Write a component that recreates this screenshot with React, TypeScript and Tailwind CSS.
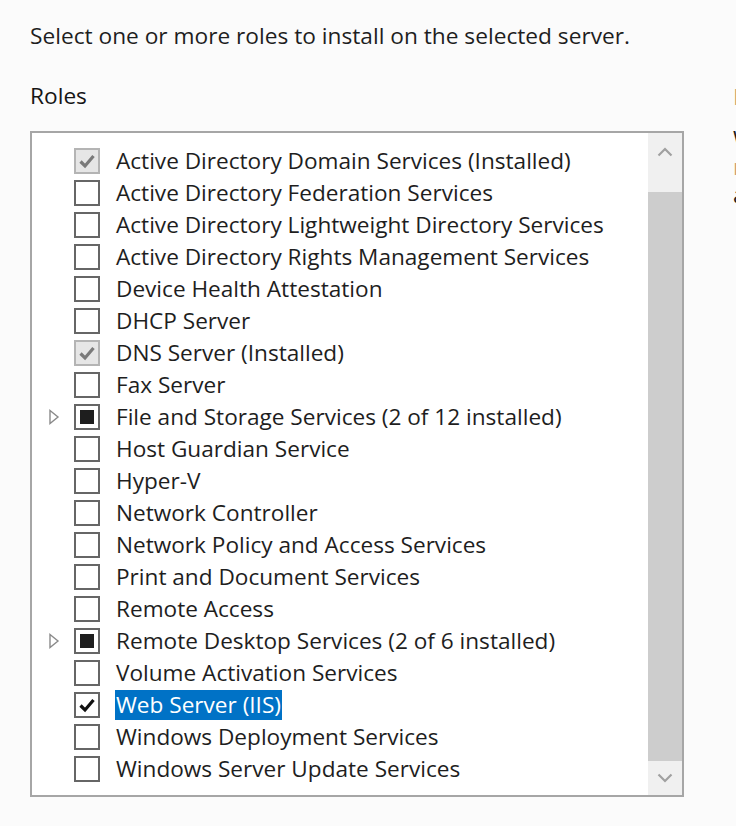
import React from "react";

type Row = { label: string; state: "none" | "installed" | "partial" | "checked"; expand?: boolean; selected?: boolean };

const rows: Row[] = [
  { label: "Active Directory Certificate Services", state: "none" },
  { label: "Active Directory Domain Services (Installed)", state: "installed" },
  { label: "Active Directory Federation Services", state: "none" },
  { label: "Active Directory Lightweight Directory Services", state: "none" },
  { label: "Active Directory Rights Management Services", state: "none" },
  { label: "Device Health Attestation", state: "none" },
  { label: "DHCP Server", state: "none" },
  { label: "DNS Server (Installed)", state: "installed" },
  { label: "Fax Server", state: "none" },
  { label: "File and Storage Services (2 of 12 installed)", state: "partial", expand: true },
  { label: "Host Guardian Service", state: "none" },
  { label: "Hyper-V", state: "none" },
  { label: "Network Controller", state: "none" },
  { label: "Network Policy and Access Services", state: "none" },
  { label: "Print and Document Services", state: "none" },
  { label: "Remote Access", state: "none" },
  { label: "Remote Desktop Services (2 of 6 installed)", state: "partial", expand: true },
  { label: "Volume Activation Services", state: "none" },
  { label: "Web Server (IIS)", state: "checked", selected: true },
  { label: "Windows Deployment Services", state: "none" },
  { label: "Windows Server Update Services", state: "none" },
];

function Check({ state }: { state: Row["state"] }) {
  if (state === "installed") {
    return (
      <div className="w-[26px] h-[26px] shrink-0 border-2 border-[#b4b4b4] bg-[#e6e6e6] flex items-center justify-center">
        <svg width="18" height="18" viewBox="0 0 18 18">
          <path d="M2.5 9.5 L7 14 L15.5 4" fill="none" stroke="#7a7a7a" strokeWidth="3.2" />
        </svg>
      </div>
    );
  }
  if (state === "partial") {
    return (
      <div className="w-[26px] h-[26px] shrink-0 border-2 border-[#666] bg-white flex items-center justify-center">
        <div className="w-[14px] h-[14px] bg-[#1e1e1e]" />
      </div>
    );
  }
  if (state === "checked") {
    return (
      <div className="w-[26px] h-[26px] shrink-0 border-2 border-[#666] bg-white flex items-center justify-center">
        <svg width="18" height="18" viewBox="0 0 18 18">
          <path d="M2.5 9.5 L7 14 L15.5 4" fill="none" stroke="#111" strokeWidth="3.2" />
        </svg>
      </div>
    );
  }
  return <div className="w-[26px] h-[26px] shrink-0 border-2 border-[#666] bg-white" />;
}

export default function App() {
  return (
    <div
      className="w-[736px] h-[826px] bg-[#fbfbfb] overflow-hidden flex text-[#1e1e1e]"
      style={{ fontFamily: '"Open Sans", "Noto Sans", sans-serif' }}
    >
      <div className="pl-[30px] pt-[22px] w-[733px] shrink-0">
        <div className="text-[22.7px] leading-[28px] whitespace-nowrap">Select one or more roles to install on the selected server.</div>
        <div className="mt-[32px] text-[22.7px] leading-[28px] text-[#151515]">Roles</div>
        <div className="mt-[21px] w-[654px] h-[666px] border-2 border-[#a6a6a6] bg-white flex overflow-hidden">
          <div className="flex-1 pt-[10px] flex flex-col">
            <div className="flex-1 overflow-hidden">
              <div className="mt-[-30px]">
                {rows.map((r, i) => (
                  <div key={i} className="h-[32px] flex items-center">
                    <div className="w-[42px] shrink-0 pl-[16px] flex items-center">
                      {r.expand && (
                        <svg width="12" height="16" viewBox="0 0 12 16">
                          <path d="M2 1.5 L10 8 L2 14.5 Z" fill="none" stroke="#8a8a8a" strokeWidth="1.4" />
                        </svg>
                      )}
                    </div>
                    <Check state={r.state} />
                    <div
                      className={
                        "ml-[15px] pl-[1px] pr-[1px] h-[30px] flex items-center text-[22.6px] whitespace-nowrap " +
                        (r.selected ? "bg-[#0072c6] text-white" : "")
                      }
                    >
                      {r.label}
                    </div>
                  </div>
                ))}
              </div>
            </div>
          </div>
          <div className="w-[34px] shrink-0 flex flex-col bg-[#f0f0f0]">
            <div className="h-[59px] flex items-start justify-center pt-[14px]">
              <svg width="16" height="10" viewBox="0 0 16 10">
                <path d="M1.5 8.5 L8 2 L14.5 8.5" fill="none" stroke="#a0a0a0" strokeWidth="2.2" />
              </svg>
            </div>
            <div className="flex-1 bg-[#cdcdcd]" />
            <div className="h-[34px] flex items-start justify-center pt-[12px]">
              <svg width="16" height="10" viewBox="0 0 16 10">
                <path d="M1.5 1.5 L8 8 L14.5 1.5" fill="none" stroke="#a0a0a0" strokeWidth="2.2" />
              </svg>
            </div>
          </div>
        </div>
      </div>
      <div className="pt-[83px] text-[22.7px] leading-[28px] whitespace-nowrap">
        <div className="text-[#c8a070]">D</div>
        <div className="mt-[14px]">W</div>
        <div className="text-[#d0a070]">r</div>
        <div>a</div>
      </div>
    </div>
  );
}
